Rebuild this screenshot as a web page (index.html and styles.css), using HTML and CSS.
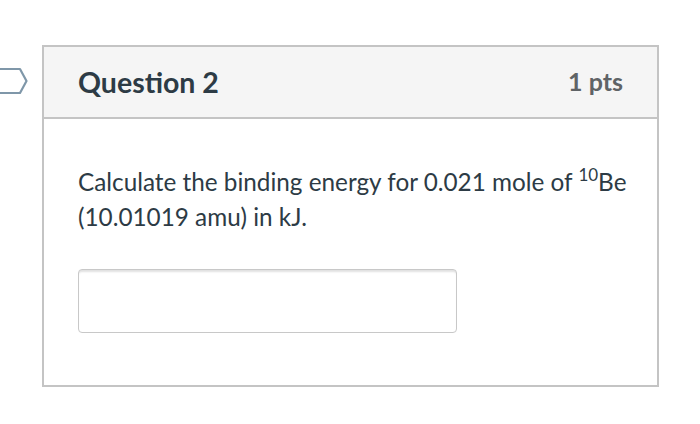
FILE: index.html
```html
<!DOCTYPE html>
<html>
<head>
<meta charset="utf-8">
<link rel="stylesheet" href="styles.css">
</head>
<body>
<div class="page">
  <svg class="flag" width="30" height="30" viewBox="0 0 30 30">
    <path d="M-2 3 H20 L26.5 15 L20 27 H-2" fill="none" stroke="#7f97a9" stroke-width="2.2" stroke-linejoin="round"/>
  </svg>
  <div class="card">
    <div class="card-header">
      <h2 class="title">Question 2</h2>
      <div class="pts">1 pts</div>
    </div>
    <div class="card-body">
      <p class="question">Calculate the binding energy for 0.021 mole of <sup>10</sup>Be (10.01019 amu) in kJ.</p>
      <input class="answer" type="text">
    </div>
  </div>
</div>
</body>
</html>
```
FILE: styles.css
```css
html, body {
  margin: 0;
  padding: 0;
  background: #fff;
}
.page {
  position: relative;
  padding: 45px 0 0 42px;
  font-family: Lato, "Liberation Sans", sans-serif;
}
.flag {
  position: absolute;
  left: 0;
  top: 66px;
}
.card {
  width: 613px;
  height: 338px;
  border: 2px solid #c4c4c4;
  display: flex;
  flex-direction: column;
}
.card-header {
  background: #f5f5f5;
  border-bottom: 2px solid #c4c4c4;
  display: flex;
  align-items: center;
  justify-content: space-between;
  padding: 0 34px 0 34px;
  box-sizing: border-box;
  height: 72px;
}
.title {
  margin: 0;
  font-size: 28.5px;
  font-weight: 700;
  color: #2d3b45;
  padding-bottom: 0;
}
.pts {
  font-size: 25px;
  font-weight: 700;
  color: #5f6366;
  padding-bottom: 2px;
}
.card-body {
  padding: 0 34px;
}
.question {
  margin: 45px 0 0 0;
  font-size: 24.3px;
  line-height: 35px;
  color: #2d3b45;
  width: 570px;
}
.question sup {
  font-size: 17px;
  line-height: 0;
  vertical-align: 10px;
}
.answer {
  display: block;
  margin-top: 35px;
  width: 379px;
  height: 64px;
  box-sizing: border-box;
  border: 1px solid #c8c8c8;
  border-radius: 4px;
  box-shadow: inset 0 3px 2px -1px rgba(0,0,0,0.12);
  background: #fff;
  outline: none;
}
```
